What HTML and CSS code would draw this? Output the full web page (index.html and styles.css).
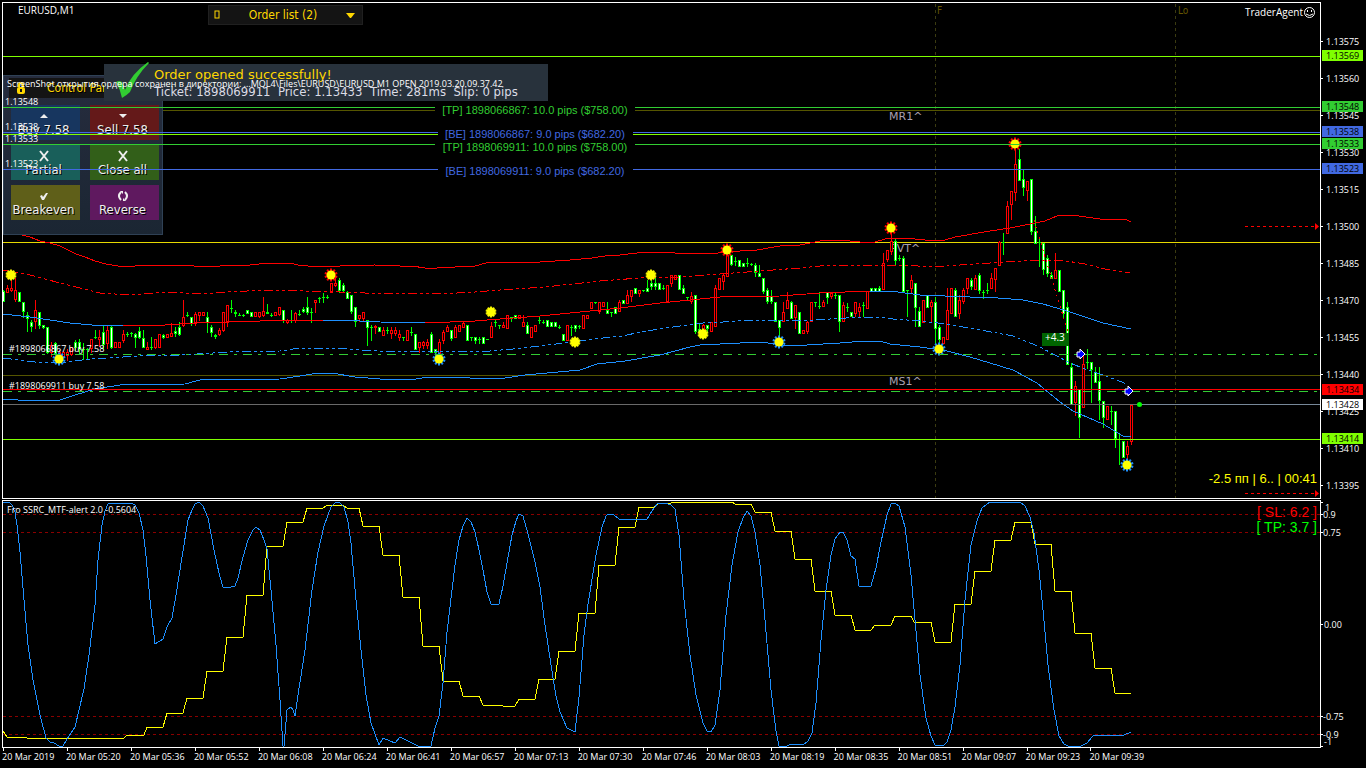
FILE: index.html
```html
<!DOCTYPE html>
<html lang="en">
<head>
<meta charset="utf-8">
<title>EURUSD,M1</title>
<link rel="stylesheet" href="styles.css">
</head>
<body>
<main class="terminal">
  <section class="pane" aria-label="EURUSD price chart">
    <svg class="plot" viewBox="0 0 1366 499">
      <g class="crisp">
        <path class="session" d="M935.5 4V498M1175.5 4V498"/>
        <path class="level olive" d="M3 110.5H435M635 110.5H1320M3 375.5H1320"/>
        <path class="level gold" d="M3 242.5H1320"/>
      </g>
      <g class="session-name">
        <text x="937" y="14">F</text>
        <text x="1178" y="14">Lo</text>
      </g>
      <g class="pivot-name">
        <text x="889" y="120">MR1^</text>
        <text x="890" y="252">PVT^</text>
        <text x="889" y="385">MS1^</text>
      </g>
      <g id="candles" class="crisp"></g>
      <g class="crisp">
        <path class="band red" d="M22 235L30 237 40 241 50 243 60 246 70 251 76 254 85 257 95 261 106 264 118 266 135 266 150 265 180 265 207 267 233 265 250 265 268 263 290 263 298 265 318 267 340 266 375 265 400 266 412 266 425 268 437 268 455 267 475 266 486 263 500 262 540 262 570 260 592 258 605 256 620 255 645 252 675 253 718 253 740 251 757 250 780 246 800 245 820 241 840 240 860 242 875 242 885 239 905 238 925 240 945 240 955 237 990 231 1010 228 1025 225 1045 221 1057 216 1072 215 1100 219 1125 219 1131 222"/>
        <path class="band red dashed" d="M3 270L30 275 60 283 80 288 100 293 130 295 165 292 205 294 225 292 270 290 340 292 365 293 420 293 440 294 475 292 500 290 545 287 600 281 640 278 680 277 720 274 760 271 800 268 830 265 875 265 900 265 935 267 960 265 975 264 1005 262 1040 260 1060 260 1085 264 1105 269 1130 273"/>
        <path class="band blue" d="M3 314L30 317 70 323 92 325 123 325M323 320L340 320 380 322 425 323M870 291L890 291 920 295 970 297 998 298 1023 300 1043 304 1067 311 1103 323 1131 329"/>
        <path class="band red" d="M123 325L165 325 195 323 260 321 288 320 323 320M425 323L475 321 500 319 540 316 580 312 620 308 660 303 690 300 720 297 780 296 820 293 870 291"/>
        <path class="band blue dashed" d="M3 358L35 362 60 363 90 359 140 356 180 355 230 352 280 351 300 348 340 348 360 350 400 352 440 351 490 351 513 349 540 346 573 342 593 339 623 336 640 332 673 327 703 323 723 322 747 320 813 320 830 319 863 317 877 317 893 319 920 321 947 324 963 327 997 333 1013 336 1040 347 1070 363 1085 369 1103 375 1127 384"/>
        <path class="band blue" d="M3 399L18 400 60 400 75 395 95 389 120 385 185 384 200 380 280 379 300 376 318 373 332 373 355 377 380 379 410 380 428 377 460 377 480 379 505 378 525 375 580 370 597 364 625 361 660 355 690 347 700 345 740 343 760 342 790 346 840 343 865 341 880 341 890 344 920 347 947 351 970 357 990 363 1013 370 1037 383 1060 402 1073 411 1103 424 1123 436 1131 436"/>
        <path class="trail" d="M1034 220L1052 280 1068 332"/>
      </g>
      <g id="stars"></g>
    </svg>

    <section class="control-panel" aria-label="Control panel">
      <h2 class="panel-title">
        <svg class="lock" viewBox="0 0 8 12"><path d="M2 5V3a2 2 0 0 1 4 0v2" fill="none" stroke="#ffd700" stroke-width="2"/><rect y="5" width="8" height="7" rx="2" fill="#ffd700"/><path d="M4 7v3" stroke="#141414" stroke-width="2"/></svg>
        <span>Control Panel</span>
      </h2>
      <div class="panel-buttons">
        <button class="trade buy"><svg viewBox="0 0 16 12"><path d="M4 8L8 4L12 8Z"/></svg><span>Buy 7.58</span></button>
        <button class="trade sell"><svg viewBox="0 0 16 12"><path d="M4 4H12L8 8Z"/></svg><span>Sell 7.58</span></button>
        <button class="trade partial"><svg viewBox="0 0 16 12"><path class="stroke" d="M4 1L12 11M12 1L4 11"/></svg><span>Partial</span></button>
        <button class="trade close"><svg viewBox="0 0 16 12"><path class="stroke" d="M4 1L12 11M12 1L4 11"/></svg><span>Close all</span></button>
        <button class="trade breakeven"><svg viewBox="0 0 16 12"><path d="M4 6L6 5L7 7L10 3L12 3L8 10L6 10Z"/></svg><span>Breakeven</span></button>
        <button class="trade reverse"><svg viewBox="0 0 16 12"><path class="stroke" d="M6 2Q2 6 6 10M10 2Q14 6 10 10"/><path d="M5 1H8V4ZM11 11H8V8Z"/></svg><span>Reverse</span></button>
      </div>
    </section>

    <div class="toast" role="status">
      <svg class="toast-check" viewBox="0 0 36 38"><path d="M2 20Q7 17 9 22L11 28Q17 12 34 0L35 1Q22 14 16 30Q13 33 8 36Q6 27 2 20Z"/></svg>
      <div>
        <strong>Order opened successfully!</strong>
        <span>Ticket: 1898069911&nbsp; Price: 1.13433&nbsp; Time: 281ms&nbsp; Slip: 0 pips</span>
      </div>
    </div>

    <button class="order-list">
      <svg class="page" viewBox="0 0 6 10"><rect x="1" y="1" width="4" height="7"/></svg>
      <span>Order list (2)</span>
      <svg class="caret" viewBox="0 0 9 5"><path d="M0 0H9L5 5H4Z"/></svg>
    </button>

    <svg class="plot overlay" viewBox="0 0 1366 499">
      <g class="crisp">
        <path class="level lime" d="M3 56.5H1320M3 134.5H438M633 134.5H1320M3 439.5H1320"/>
        <path class="level green" d="M3 107.5H435M635 107.5H1320M3 144.5H435M635 144.5H1320"/>
        <path class="level royal" d="M3 132.5H438M633 132.5H1320M3 169.5H438M633 169.5H1320"/>
        <path class="level green open" d="M3 354.5H1320M3 391.5H1320"/>
        <path class="level red" d="M3 389.5H1320"/>
        <path class="level gray" d="M3 404.5H1139"/>
        <path class="level slate" d="M1139 404.5H1320"/>
        <path class="level red stops" d="M1245 226.5H1314M1245 493.5H1314"/>
        <path class="frame" d="M2.5 498.5V2.5H1320.5V498.5Z"/>
        <path class="frame" d="M1320 41.5h3m-3 37h3m-3 37h3m-3 37h3m-3 37h3m-3 37h3m-3 37h3m-3 37h3m-3 37h3m-3 37h3m-3 37h3m-3 37h3m-3 37h3"/>
      </g>
      <path class="stop-tip" d="M1315 223L1319 226.500L1315 230ZM1315 490L1319 493.500L1315 497Z"/>
      <circle class="quote" cx="1139.500" cy="404.500" r="2.500"/>
      <path class="entry" d="M1077 352H1080V349L1085 354L1080 359V357H1077ZM1125 389H1128V386L1133 391L1128 396V394H1125Z"/>
      <rect class="profit" x="1042" y="333" width="27" height="13"/>
      <g id="marks"></g>
      <g class="smiley"><circle cx="1309.500" cy="12.500" r="5"/><path d="M1306 14Q1309.500 17 1313 14M1307.500 10v2M1311.500 10v2"/></g>
      <g class="small" id="scale"></g>
    </svg>
  </section>

  <section class="pane" aria-label="Fro SSRC indicator">
    <svg class="plot" viewBox="0 499 1366 249">
      <g class="crisp">
        <path class="threshold" d="M3 514.500H1320M3 532.500H1320M3 716.500H1320M3 734.500H1320"/>
        <path class="band yellow" d="M3 731L7 737H26L27 738H124L127 735H144L147 727H163L167 713H183L187 698H203L207 671H223L227 637H243L247 595H263L267 546H283L287 522H303L307 508H323L328 505H343L347 508H359L363 526H379L383 555H399L403 597H419L423 646H439L443 681H459L463 696H479L483 705H502L503 706H515L519 699H535L539 679H555L559 651H575L579 613H595L599 565H615L619 527H635L639 507H654L659 503H671L673 502H732L735 504H751L755 512H771L775 531H791L795 559H811L815 591H831L835 615H851L855 630H871L875 625H891L895 616H911L914 622H931L935 642H951L955 604H971L975 571H991L995 540H1011L1015 522H1031L1035 544H1051L1055 591H1071L1075 633H1091L1095 668H1111L1115 693H1131"/>
        <path class="band blue" d="M3 502L9 502 12 505 15 512 17 525 20 552 24 600 28 645 33 680 40 715 46 738 50 742 54 743 59 746 63 746 67 739 75 727 79 710 84 689 89 655 95 605 98 560 102 525 105 511 108 504 131 503 135 505 139 513 143 530 146 556 150 600 155 644 163 639 167 627 172 618 176 595 183 551 188 520 192 510 195 504 199 502 203 506 208 518 214 550 219 573 223 587 231 587 235 586 238 578 243 557 248 540 253 530 256 527 260 530 264 540 267 549 271 590 276 645 280 700 283 746 284 746 287 710 291 707 293 710 295 716 298 695 305 650 312 590 318 552 324 526 331 507 335 503 339 502 344 507 348 522 351 543 356 600 361 650 366 695 371 723 379 745 383 738 390 741 395 743 400 737 408 741 418 746 431 746 435 728 439 716 443 683 447 632 450 607 455 565 459 540 463 526 467 518 471 522 475 532 479 550 483 570 487 592 491 604 499 604 503 586 507 563 512 535 516 521 519 514 523 516 527 530 535 562 540 587 545 625 551 665 556 696 560 712 567 728 575 732 579 697 584 635 588 604 596 555 602 527 606 516 608 514 614 515 619 519 647 519 652 511 657 504 665 503 671 505 675 509 679 535 684 600 690 655 696 695 703 723 707 731 711 732 715 725 720 690 726 615 732 565 738 532 743 518 747 511 751 516 755 532 760 565 765 620 771 690 776 731 779 746 787 746 791 744 803 745 808 741 812 733 816 703 821 640 826 590 831 555 835 539 840 532 843 532 847 540 851 556 855 559 859 586 871 586 876 568 881 542 887 515 891 504 895 503 899 506 905 527 911 575 915 620 920 675 926 718 931 736 935 745 943 746 947 742 951 730 955 707 960 665 965 600 971 545 977 521 982 508 990 502 1020 502 1025 506 1030 517 1034 533 1039 570 1043 610 1048 665 1054 710 1059 736 1064 744 1068 746 1081 746 1087 743 1093 736 1124 735 1131 732"/>
        <path class="frame" d="M2.500 747.500V500.500H1320.500V747.500Z"/>
        <path class="frame" d="M1320 502.500h3M1320 514.500h3M1320 532.500h3M1320 624.500h3M1320 716.500h3M1320 734.500h3M1320 746.500h3"/>
      </g>
      <g class="small">
        <text x="1325" y="511">1</text>
        <text x="1323" y="518">0.9</text>
        <text x="1323" y="536">0.75</text>
        <text x="1324" y="628">0.00</text>
        <text x="1323" y="720">-0.75</text>
        <text x="1323" y="738">-0.9</text>
        <text x="1324" y="745">-1</text>
        <text x="7" y="513">Fro SSRC_MTF-alert 2.0 -0.5604</text>
      </g>
      <g class="readout" text-anchor="end">
        <text class="fill-red" x="1317" y="517">[ SL: 6.2 ]</text>
        <text class="fill-lime" x="1317" y="532">[ TP: 3.7 ]</text>
      </g>
    </svg>
  </section>

  <ol class="times">
    <li>20 Mar 2019</li><li>20 Mar 05:20</li><li>20 Mar 05:36</li><li>20 Mar 05:52</li><li>20 Mar 06:08</li><li>20 Mar 06:24</li><li>20 Mar 06:41</li><li>20 Mar 06:57</li><li>20 Mar 07:13</li><li>20 Mar 07:30</li><li>20 Mar 07:46</li><li>20 Mar 08:03</li><li>20 Mar 08:19</li><li>20 Mar 08:35</li><li>20 Mar 08:51</li><li>20 Mar 09:07</li><li>20 Mar 09:23</li><li>20 Mar 09:39</li>
  </ol>
</main>
<script src="chart.js"></script>
</body>
</html>
```

FILE: styles.css
```css
* { box-sizing: border-box; }
body { margin: 0; background: #000; color: #fff; font-family: "DejaVu Sans Condensed", "DejaVu Sans", sans-serif; }
.terminal { display: flex; flex-direction: column; min-height: 100vh; overflow: hidden; }
.pane { position: relative; }
.plot { display: block; width: 100%; height: auto; }
.overlay { position: absolute; inset: 0; pointer-events: none; }
.crisp { shape-rendering: crispEdges; }

.frame { fill: none; stroke: #fff; }
.level { fill: none; stroke-width: 1; }
.lime { stroke: #7fff00; }
.green { stroke: #32cd32; }
.royal { stroke: #4169e1; }
.olive { stroke: #555500; }
.gold { stroke: #e6d800; }
.red { stroke: #f00; }
.gray { stroke: #696969; }
.slate { stroke: #778899; }
.open { stroke-dasharray: 9 6 3 6; }
.stops { stroke-dasharray: 3 3; }
.stop-tip { fill: #f00; }
.session { stroke: #3b3b10; stroke-dasharray: 3 3; }
.threshold { stroke: #8b0000; stroke-dasharray: 3 3; }
.band { fill: none; stroke-width: 1; }
.blue { stroke: #1e90ff; }
.yellow { stroke: #ff0; }
.dashed { stroke-dasharray: 9 3 3 3 3 3; }
.trail { fill: none; stroke: #f00; stroke-dasharray: 2 4; }
.wick-up, .body-up { fill: #f00; }
.wick-down, .body-down { fill: #0f0; }
.core-up { fill: #000; }
.core-down { fill: #fff; }
.sun { fill: #ff0; }
.ray { fill: none; stroke-width: 2; }
.ray-top { stroke: #f00; }
.ray-bottom { stroke: #1e90ff; }
.ray-plain { stroke: #e6e600; }
.quote { fill: #0f0; }
.entry { fill: #00f; stroke: #fff; stroke-width: 1; }
.profit { fill: #006400; }
.smiley { fill: none; stroke: #fff; stroke-width: 1; }

.session-name { fill: #665500; font-size: 10px; }
.pivot-name { fill: #a9a0b0; font-size: 11px; font-family: "DejaVu Sans", sans-serif; }
.small { fill: #fff; font-size: 9px; font-family: "Open Sans", sans-serif; }
.caption { fill: #fff; font-size: 10px; font-family: "Open Sans", sans-serif; }
.order-tag { font-size: 11px; font-family: "Liberation Sans", Arial, sans-serif; }
.readout { font-size: 14px; font-family: "Liberation Sans", Arial, sans-serif; }
.countdown { font-size: 13px; font-family: "Liberation Sans", Arial, sans-serif; }
.fill-green { fill: #32cd32; }
.fill-royal { fill: #4169e1; }
.fill-red { fill: #f00; }
.fill-lime { fill: #0f0; }
.fill-yellow { fill: #ff0; }

.control-panel { position: absolute; left: 3px; top: 75px; width: 160px; height: 160px; padding: 2px 3px 14px 5px; border: 1px solid #2f4155; background: linear-gradient(#262c3e, #1b2633); }
.panel-title { display: flex; align-items: center; gap: 22px; height: 20px; margin: 0 0 7px; padding-left: 8px; background: #141414; color: #ffd700; font-size: 12px; font-weight: 400; text-shadow: 1px 1px #000; }
.lock { width: 8px; height: 12px; }
.panel-buttons { display: grid; grid-template-columns: 69px 69px; justify-content: space-between; row-gap: 5px; padding: 0 0 0 2px; }
.trade { display: flex; flex-direction: column; align-items: center; height: 35px; padding: 5px 4px 0 0; border: 0; color: #eee; font: 13px/16px "DejaVu Sans Condensed", "DejaVu Sans", sans-serif; text-shadow: 1px 1px #000; white-space: nowrap; }
.trade svg { width: 16px; height: 12px; flex: none; fill: #eee; }
.trade .stroke { fill: none; stroke: #eee; stroke-width: 2; }
.buy { background: #17365f; }
.sell { background: #641919; }
.partial { background: #195f5a; }
.close { background: #325f19; }
.breakeven { background: #5f5f19; }
.reverse { background: #5f195f; }

.toast { position: absolute; left: 104px; top: 64px; width: 444px; height: 37px; padding: 2px 0 0 50px; background: #28323c; color: #dcdce6; font: 13px/17px "DejaVu Sans Condensed", "DejaVu Sans", sans-serif; white-space: nowrap; }
.toast-check { position: absolute; left: 10px; top: -2px; width: 36px; height: 38px; fill: #32cd32; }
.toast strong, .toast span { display: block; }
.toast strong { color: #ffd700; font-family: "DejaVu Sans", sans-serif; font-weight: 400; }

.order-list { position: absolute; left: 208px; top: 5px; width: 155px; height: 20px; display: flex; align-items: center; justify-content: space-between; padding: 0 7px 0 5px; border: 1px solid #202020; background: #141414; color: #ffd700; font: 12px/16px "DejaVu Sans Condensed", "DejaVu Sans", sans-serif; }
.page { width: 6px; height: 10px; fill: none; stroke: #ffd700; }
.caret { width: 9px; height: 5px; fill: #ffd700; }

.times { display: grid; grid-template-columns: repeat(18, 4.69%); margin: 0; padding: 0 0 0 2px; list-style: none; font: 9px/12px "Open Sans", sans-serif; white-space: nowrap; }
.times li::before { content: ""; display: block; width: 1px; height: 3px; margin-left: 1px; background: #fff; }
```

FILE: chart.js
```js
const SVG = "http://www.w3.org/2000/svg";

function add(parent, name, attrs, text) {
  const el = document.createElementNS(SVG, name);
  for (const key in attrs) el.setAttribute(key, attrs[key]);
  if (text) el.textContent = text;
  parent.appendChild(el);
}

// direction (u/d), high, body top, body bottom, low
const bars = `d290,291,301,301 u285,288,292,292 u278,288,290,291 u278,290,299,301 d292,292,301,301 d302,302,311,317 d312,315,318,331 d320,322,326,331 u300,310,321,328 d312,312,325,328
d325,325,327,328 d327,327,352,353 u342,345,352,356 d342,343,353,354 u350,352,356,358 u351,352,356,357 u349,352,355,360 u347,347,354,355 d340,342,347,350 d339,342,349,353
d343,349,349,359 d348,349,349,358 u339,339,348,352 d330,337,337,338 u330,337,339,346 d325,332,344,348 u325,330,343,348 d326,327,347,348 u342,342,347,347 u342,342,347,347
u330,334,340,342 d332,334,334,336 d332,333,333,336 d333,334,337,347 d327,331,337,338 d330,338,347,347 u342,347,349,349 d337,347,347,349 u339,339,347,348 u334,334,347,347
d334,335,337,338 u334,334,337,337 u323,333,336,336 d327,331,333,336 d322,327,334,335 u300,317,325,326 d312,315,315,316 d317,317,323,325 u312,314,323,325 u312,312,315,320
u312,312,315,315 d312,317,322,332 d325,327,332,336 d334,335,336,338 u328,330,334,335 u312,312,330,331 u305,305,322,326 d300,308,308,312 d310,312,313,316 d313,315,315,315
d314,315,315,316 d310,310,313,313 d312,312,316,316 u312,312,316,316 u312,312,316,317 u297,311,315,316 d304,312,313,313 d313,315,315,316 u312,312,315,315 u307,307,314,315
d310,310,320,322 u319,320,322,323 d310,320,320,322 u312,313,320,322 d310,314,314,315 d307,309,311,312 d297,307,312,314 d308,312,312,322 u300,300,302,312 d297,298,298,302
d293,297,297,302 d295,297,297,298 u283,283,292,292 u276,283,285,286 d278,280,290,292 d283,285,290,291 d291,292,298,298 d295,295,311,313 d307,307,321,326 u315,315,318,321
u312,312,318,321 d320,320,327,345 d325,327,327,340 u325,326,327,333 d327,327,331,331 u327,330,335,335 d327,330,330,333 u327,330,333,338 u327,330,333,335 u330,334,337,340
d337,337,337,340 u330,330,340,340 d327,332,332,335 d334,334,349,349 u342,342,347,352 u341,342,345,348 u339,342,345,348 d332,334,352,352 d349,349,352,356 u339,342,353,356
u330,332,340,343 u325,327,331,331 d330,330,338,340 u325,327,337,337 u325,325,331,331 u322,323,327,327 d325,325,340,340 d337,337,337,340 d337,337,340,343 d337,339,339,343
d337,337,343,343 d339,339,339,339 u322,326,337,337 d320,322,322,326 d325,325,325,328 u322,325,327,327 u315,315,328,328 d317,317,317,321 d315,315,318,318 u315,315,318,318
u315,322,326,326 d322,325,333,333 u327,327,337,337 u325,325,331,331 d317,320,320,323 d320,322,322,323 d320,320,326,326 d322,322,326,326 d322,322,326,326 d325,327,327,328
d334,334,340,340 u325,325,340,340 d325,327,327,335 d325,325,328,331 d325,326,326,328 u315,315,328,328 u315,315,318,318 u302,302,308,308 d302,302,302,303 u302,302,311,313
u302,302,306,306 d302,310,313,313 d312,312,312,316 d307,307,313,313 u300,302,311,311 d300,300,303,303 u290,295,303,303 u290,290,296,301 d288,288,293,293 u290,290,293,296
d290,290,290,291 d280,288,291,291 d277,283,286,289 d277,283,286,289 d283,283,289,289 d285,288,288,289 u285,285,301,301 u275,275,283,286 u275,275,279,279 d275,275,289,289
d285,288,293,293 d297,297,297,300 u292,296,301,303 d295,295,331,333 d324,329,332,336 u324,325,332,335 d325,325,328,331 u322,322,331,331 u285,288,326,326 u278,278,289,289
u273,275,281,289 u255,255,276,276 d255,255,264,265 d257,261,261,265 d260,260,266,266 d263,263,266,266 d258,263,263,266 d263,264,264,265 d263,265,272,276 d265,273,276,276
d278,278,291,293 d288,290,301,303 d290,296,301,303 d302,302,321,321 d320,320,327,337 u302,312,321,321 u292,300,308,308 d301,302,318,318 u305,305,317,328 d312,312,333,333
u330,330,333,333 u321,322,331,333 u302,302,321,321 d302,302,302,306 d292,306,306,308 u300,302,306,306 d292,292,297,303 u292,293,296,298 d293,295,295,298 d295,295,321,331
u302,305,321,321 d303,307,307,311 d312,312,316,316 u302,302,313,316 u303,307,311,316 d302,305,305,316 u291,291,308,308 d288,288,291,291 d288,288,291,291 d286,288,291,291
u253,263,289,289 u250,250,259,261 u233,241,251,254 d238,241,260,265 d255,258,258,260 d256,258,291,292 d290,290,290,316 u275,280,288,293 d283,283,307,326 d307,311,326,326
u300,300,322,322 d295,295,307,307 u300,302,306,321 d297,302,328,343 d325,327,339,345 u337,337,343,343 u288,310,339,339 u288,288,313,313 d288,290,316,316 u295,300,313,318
u288,290,301,303 u278,278,288,293 d278,280,286,289 u275,278,289,289 d273,275,290,293 d290,292,292,298 d283,290,290,293 u273,278,288,288 u268,268,279,291 u241,242,265,265
d233,242,242,254 u201,206,233,233 u191,191,204,219 u150,164,192,200 d149,159,180,180 d170,179,187,195 u181,181,190,200 d179,179,231,234 d216,231,243,243 d238,242,242,266
d243,243,269,274 d255,258,273,276 d272,275,278,278 u253,270,278,278 d270,270,291,291 d290,290,313,318 d302,307,364,364 d363,367,404,404 u381,386,402,415 d389,389,417,437
u355,364,407,407 d349,362,362,368 d362,362,369,402 d367,372,382,382 d367,381,400,419 d401,401,417,427 u406,406,419,419 d406,411,411,424 d411,411,438,447 d433,439,439,464
d441,441,457,457 u441,446,454,460 u405,405,441,444`.split(/\s+/);

const candles = document.getElementById("candles");
bars.forEach((bar, i) => {
  const kind = bar[0] === "u" ? "up" : "down";
  const [high, top, bottom, low] = bar.slice(1).split(",").map(Number);
  const x = 3 + i * 4;
  const h = bottom - top + 1;
  add(candles, "rect", { class: "wick-" + kind, x, y: high, width: 1, height: low - high + 1 });
  add(candles, "rect", { class: "body-" + kind, x: x - 1, y: top, width: 3, height: h });
  if (h > 2) add(candles, "rect", { class: "core-" + kind, x, y: top + 1, width: 1, height: h - 2 });
});

const stars = document.getElementById("stars");
[[11, 275, "plain"], [59, 359, "bottom"], [331, 275, "top"], [439, 359, "bottom"], [491, 312, "plain"], [575, 342, "plain"],
 [651, 275, "plain"], [703, 334, "plain"], [727, 250, "top"], [779, 342, "bottom"], [891, 228, "top"], [939, 349, "bottom"],
 [1015, 144, "top"], [1127, 465, "bottom"]].forEach(([x, y, kind]) => {
  let d = "";
  const reach = kind === "plain" ? 5.5 : 6.5;
  for (let k = 0; k < 10; k++) {
    const a = k * Math.PI / 5 + Math.PI / 10;
    d += `M${x} ${y}l${(Math.cos(a) * reach).toFixed(1)} ${(Math.sin(a) * reach).toFixed(1)}`;
  }
  add(stars, "path", { class: "ray ray-" + kind, d });
  add(stars, "circle", { class: "sun", cx: x, cy: y, r: 4.5 });
});

const scale = document.getElementById("scale");
for (let i = 0; i < 13; i++) add(scale, "text", { x: 1326, y: 45 + i * 37 }, (1.13575 - i * 0.00015).toFixed(5));
[["1.13569", 55, "#7fff00"], ["1.13548", 106, "#32cd32"], ["1.13538", 131, "#4169e1"], ["1.13533", 143, "#32cd32"],
 ["1.13523", 168, "#4169e1"], ["1.13434", 389, "#f00"], ["1.13428", 404, "#fff"], ["1.13414", 438, "#7fff00"]].forEach(([label, y, fill]) => {
  add(scale, "rect", { x: 1322, y: y - 5, width: 41, height: 11, fill });
  add(scale, "text", { x: 1326, y: y + 4, style: "fill:#000" }, label);
});

const marks = document.getElementById("marks");
[["1.13548", 105], ["1.13538", 130], ["1.13533", 142], ["1.13523", 167]].forEach(([label, y]) =>
  add(marks, "text", { class: "small", x: 5, y }, label));
[["[TP] 1898066867: 10.0 pips ($758.00)", 114, "green"], ["[BE] 1898066867: 9.0 pips ($682.20)", 138, "royal"],
 ["[TP] 1898069911: 10.0 pips ($758.00)", 151, "green"], ["[BE] 1898069911: 9.0 pips ($682.20)", 175, "royal"]].forEach(([label, y, tone]) =>
  add(marks, "text", { class: "order-tag fill-" + tone, x: 535, y, "text-anchor": "middle" }, label));
add(marks, "text", { class: "caption", x: 18, y: 14 }, "EURUSD,M1");
add(marks, "text", { class: "caption", x: 1303, y: 16, "text-anchor": "end" }, "TraderAgent");
add(marks, "text", { class: "small", x: 7, y: 87 }, "ScreenShot открытия ордера сохранен в директории: ...MQL4\\Files\\EURUSD\\EURUSD M1 OPEN 2019.03.20 09.37.42");
add(marks, "text", { class: "small", x: 9, y: 352 }, "#1898066867 buy 7.58");
add(marks, "text", { class: "small", x: 9, y: 389 }, "#1898069911 buy 7.58");
add(marks, "text", { class: "caption", x: 1045, y: 341 }, "+4.3");
add(marks, "text", { class: "countdown fill-yellow", x: 1317, y: 483, "text-anchor": "end" }, "-2.5 пп | 6.. | 00:41");
```
